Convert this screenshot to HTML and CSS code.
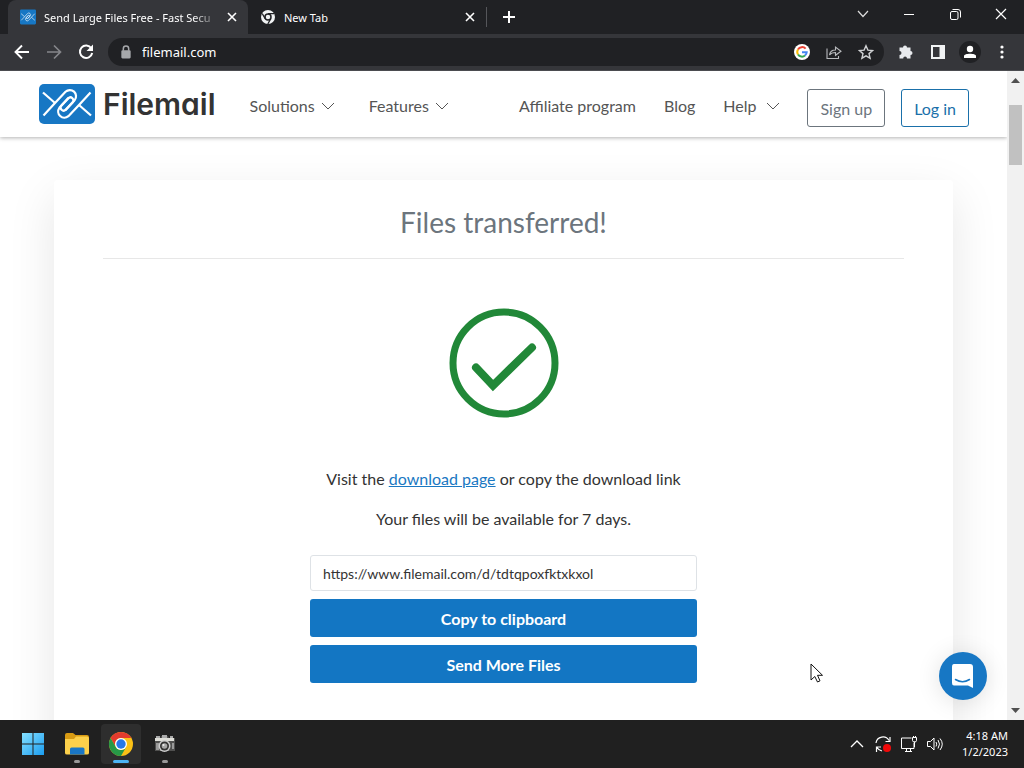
FILE: index.html
```html
<!DOCTYPE html>
<html lang="en">
<head>
<meta charset="utf-8">
<meta name="viewport" content="width=device-width, initial-scale=1">
<title>Send Large Files Free - Fast Secure File Transfer</title>
<link rel="stylesheet" href="styles.css">
</head>
<body>
<svg width="0" height="0" class="defs" aria-hidden="true">
  <symbol id="mark" viewBox="0 0 56 40">
    <rect width="56" height="40" rx="5" fill="#1777c4"/>
    <g fill="none" stroke="#fff" stroke-width="2.2" stroke-linejoin="round">
      <path d="M4 8.500 16 19"/>
      <path d="M4.500 31.500 16 19 26.500 7.800A6.200 6.200 0 0 1 35.600 16.200L26.800 25.600A3 3 0 0 1 22.400 21.500L29.500 13.800"/>
      <path d="M52 31.500 40 21"/>
      <path d="M51.500 8.500 40 21 29.400 32.200A6.200 6.200 0 0 1 20.400 23.800L29.200 14.400A3 3 0 0 1 33.600 18.500L26.500 26.200"/>
    </g>
  </symbol>
  <symbol id="chev" viewBox="0 0 14 8"><path d="M1 1 7 7 13 1" fill="none" stroke="currentColor"/></symbol>
  <symbol id="x" viewBox="0 0 10 10"><path d="M1 1 9 9M9 1 1 9" fill="none" stroke="currentColor" stroke-width="1.600"/></symbol>
</svg>

<div class="tabstrip">
  <div class="tab tab-active">
    <svg class="favicon" viewBox="0 0 56 52"><rect width="56" height="52" rx="4" fill="#1777c4"/><use href="#mark" y="6" width="56" height="40"/></svg>
    <span class="tab-title">Send Large Files Free - Fast Secu</span>
    <button class="tab-btn" aria-label="Close tab"><svg width="10" height="10"><use href="#x"/></svg></button>
  </div>
  <div class="tab tab-idle">
    <svg class="favicon" viewBox="0 0 16 16"><circle cx="8" cy="8" r="7" fill="#f1f3f4"/><circle cx="8" cy="8" r="3" fill="none" stroke="#202124" stroke-width="1.500"/><path d="M8 4.700H14M5.200 9.600 2.200 4.500M10.800 9.600 7.800 15" stroke="#202124" stroke-width="1.300"/></svg>
    <span class="tab-title">New Tab</span>
    <button class="tab-btn" aria-label="Close tab"><svg width="10" height="10"><use href="#x"/></svg></button>
  </div>
  <button class="tab-btn new-tab" aria-label="New tab"><svg width="12" height="12" viewBox="0 0 12 12"><path d="M6 0V12M0 6H12" stroke="#fff" stroke-width="2"/></svg></button>
  <div class="window-controls">
    <button aria-label="Search tabs"><svg width="12" height="8" viewBox="0 0 12 8"><path d="M1 1 6 6.500 11 1" fill="none" stroke="#ddd" stroke-width="1.200"/></svg></button>
    <button aria-label="Minimize"><svg width="10" height="10" viewBox="0 0 10 10"><path d="M0 5.500H10" stroke="#fff"/></svg></button>
    <button aria-label="Restore"><svg width="11" height="11" viewBox="0 0 11 11"><rect x=".5" y="2.500" width="7.500" height="8" rx="1.500" fill="none" stroke="#fff"/><path d="M2.500.5H8A2.500 2.500 0 0 1 10.500 3V8.500" fill="none" stroke="#fff"/></svg></button>
    <button aria-label="Close"><svg width="12" height="12" viewBox="0 0 12 12"><path d="M1 1 11 11M11 1 1 11" stroke="#fff" stroke-width="1.200"/></svg></button>
  </div>
</div>

<div class="toolbar">
  <button class="tool" aria-label="Back"><svg viewBox="0 0 16 16"><path d="M15 8H2M8 1.500 1.500 8 8 14.500" fill="none" stroke="#fff" stroke-width="1.900"/></svg></button>
  <button class="tool" aria-label="Forward"><svg viewBox="0 0 16 16"><path d="M1 8H14M8 1.500 14.500 8 8 14.500" fill="none" stroke="#85868a" stroke-width="1.700"/></svg></button>
  <button class="tool" aria-label="Reload"><svg viewBox="0 0 16 16"><path d="M13.300 4.300A6.200 6.200 0 1 0 14.200 9" fill="none" stroke="#fff" stroke-width="2"/><path d="M15 .5V7H8.500Z" fill="#fff"/></svg></button>
  <div class="omnibox">
    <svg class="lock" viewBox="0 0 10 12"><rect x="1" y="4.500" width="8" height="7" rx="1" fill="#a6a8ab"/><path d="M2.700 5V3.200a2.300 2.300 0 0 1 4.600 0V5" fill="none" stroke="#a6a8ab" stroke-width="1.300"/></svg>
    <input class="address" type="text" value="filemail.com" aria-label="Address">
    <svg class="ico" viewBox="0 0 16 16"><circle cx="8" cy="8" r="8" fill="#fff"/><g fill="none" stroke-width="2"><path d="M11.600 4.700A4.700 4.700 0 0 0 4 5.500" stroke="#ea4335"/><path d="M4 5.500a4.700 4.700 0 0 0 0 5" stroke="#fbbc05"/><path d="M4 10.500a4.700 4.700 0 0 0 7 1" stroke="#34a853"/><path d="M11 11.500A4.700 4.700 0 0 0 12.700 8.200H8" stroke="#4285f4"/></g></svg>
    <svg class="ico" viewBox="0 0 16 16"><path d="M1 4.500V14.500H12.500V12M3.500 11C4 7.500 6 6 9.500 6V3L15 7.200 9.500 11.300V8.500C7 8.500 5 9 3.500 11Z" fill="none" stroke="#b8babd" stroke-width="1.100"/></svg>
    <svg class="ico" viewBox="0 0 16 16"><path d="M8 1.800 9.900 6.100 14.600 6.500 11 9.600 12.100 14.200 8 11.800 3.900 14.200 5 9.600 1.400 6.500 6.100 6.100Z" fill="none" stroke="#d0d2d4" stroke-width="1.400"/></svg>
  </div>
  <div class="tools-right">
    <button class="tool" aria-label="Extensions"><svg viewBox="0 0 16 16"><path d="M5 3.500a2 2 0 0 1 4 0H12.500V7a2 2 0 0 1 0 4V14.500H9a1.900 1.900 0 0 0-3.800 0H1.500V11a2 2 0 0 0 0-4V3.500Z" fill="#e8eaed"/></svg></button>
    <button class="tool" aria-label="Side panel"><svg viewBox="0 0 16 16"><path d="M1 1H15V15H1ZM3 3V13H9.500V3Z" fill="#f1f3f4" fill-rule="evenodd"/></svg></button>
    <button class="tool avatar" aria-label="Profile"><svg viewBox="0 0 16 16"><circle cx="8" cy="5" r="3.200" fill="#fff"/><path d="M2 14V12C2 9 14 9 14 12V14Z" fill="#fff"/></svg></button>
    <button class="tool" aria-label="Menu"><svg viewBox="0 0 16 16"><g fill="#fff"><circle cx="8" cy="3" r="1.600"/><circle cx="8" cy="8" r="1.600"/><circle cx="8" cy="13" r="1.600"/></g></svg></button>
  </div>
</div>

<div class="viewport">
  <div class="page">
    <header class="site-header">
      <a class="brand" href="#"><svg class="brand-mark" aria-hidden="true"><use href="#mark"/></svg><span>Filemail</span></a>
      <nav class="nav-left">
        <a href="#">Solutions <svg class="chev"><use href="#chev"/></svg></a>
        <a href="#">Features <svg class="chev"><use href="#chev"/></svg></a>
      </nav>
      <nav class="nav-right">
        <a href="#">Affiliate program</a>
        <a href="#">Blog</a>
        <a class="help" href="#">Help <svg class="chev"><use href="#chev"/></svg></a>
      </nav>
      <div class="account">
        <button class="btn-outline">Sign up</button>
        <button class="btn-outline btn-login">Log in</button>
      </div>
    </header>
    <main class="stage">
      <section class="card">
        <h1>Files transferred!</h1>
        <svg class="tick" viewBox="0 0 110 110" aria-hidden="true"><circle cx="55" cy="55" r="51" fill="none" stroke="#218838" stroke-width="7"/><path d="M27 59.500 44 77.500 83 39.500" fill="none" stroke="#218838" stroke-width="8" stroke-linecap="round"/></svg>
        <p>Visit the <a href="#">download page</a> or copy the download link</p>
        <p>Your files will be available for 7 days.</p>
        <div class="actions">
          <input class="link-box" type="text" value="https://www.filemail.com/d/tdtqpoxfktxkxol" aria-label="Download link" readonly>
          <button class="btn">Copy to clipboard</button>
          <button class="btn">Send More Files</button>
        </div>
      </section>
    </main>
    <button class="chat" aria-label="Open chat"><svg width="24" height="26" viewBox="0 0 24 26"><path d="M3 1H19Q22 1 22 4V25L17 22.500H3Q1 22.500 1 20V4Q1 1 3 1Z" fill="#fff"/><path d="M4.500 16.500Q11.500 21 18.500 16.500" fill="none" stroke="#1777c4" stroke-width="1.500" stroke-linecap="round"/></svg></button>
    <svg class="pointer" viewBox="0 0 14 20" aria-hidden="true"><path d="M1 1V17L4.800 13.500 7.500 19 10 17.800 7.500 12.300H12.500Z" fill="#fff" stroke="#111"/></svg>
  </div>
  <div class="scrollbar">
    <svg viewBox="0 0 9 5"><path d="M4.500 0 9 5H0Z"/></svg>
    <div class="track"><div class="thumb"></div></div>
    <svg viewBox="0 0 9 5"><path d="M0 0H9L4.500 5Z"/></svg>
  </div>
</div>

<footer class="taskbar">
  <div class="apps">
    <button class="app" aria-label="Start"><svg viewBox="0 0 26 26"><defs><linearGradient id="win" x2="1" y2="1"><stop stop-color="#85e0ff"/><stop offset="1" stop-color="#1b9df0"/></linearGradient></defs><path d="M2 2H12.500V12.500H2ZM13.500 2H24V12.500H13.500ZM2 13.500H12.500V24H2ZM13.500 13.500H24V24H13.500Z" fill="url(#win)"/></svg></button>
    <button class="app app-open" aria-label="File Explorer"><svg viewBox="0 0 26 26"><path d="M1 4Q1 2 3 2H9L11.500 4H23Q25 4 25 6V12H1Z" fill="#d89b13"/><path d="M1 8H10L12 5.500H23Q25 5.500 25 7.500V22Q25 23.500 23 23.500H3Q1 23.500 1 22Z" fill="#fcd04b"/><path d="M6 23.500V18Q6 16.500 7.500 16.500H19Q20.500 16.500 20.500 18V23.500Z" fill="#1976c5"/></svg></button>
    <button class="app app-current" aria-label="Google Chrome"><svg viewBox="0 0 26 26"><circle cx="13" cy="13" r="12" fill="#fbc116"/><path d="M2.600 7A12 12 0 0 1 23.400 7H13A6 6 0 0 0 7.800 16Z" fill="#e33b2e"/><path d="M2.600 7A12 12 0 0 0 13 25L18.200 16A6 6 0 0 1 7.800 16Z" fill="#279847"/><circle cx="13" cy="13" r="6" fill="#fff"/><circle cx="13" cy="13" r="4.700" fill="#2878e8"/></svg></button>
    <button class="app app-open" aria-label="Camera"><svg viewBox="0 0 26 26"><path d="M3 8H8L9 5H16L17 7H23V20H3Z" fill="#50504f"/><path d="M3 7H22V10H3Z" fill="#deded8"/><path d="M4 5H8V7H4ZM10 4H15V7H10ZM18 5H21V7H18Z" fill="#aaa"/><path d="M4 12H7V19H4ZM20 12H22V18H20Z" fill="#999"/><circle cx="12.500" cy="15" r="6" fill="#ccc"/><circle cx="12.500" cy="15" r="4.500" fill="#333"/><circle cx="12.500" cy="15" r="2.800" fill="#a6a6a6"/><circle cx="11.500" cy="14" r="1" fill="#eee"/></svg></button>
  </div>
  <div class="tray">
    <svg viewBox="0 0 18 18"><path d="M3 12 9 6 15 12" fill="none" stroke="#fff" stroke-width="1.300"/></svg>
    <svg viewBox="0 0 18 18"><path d="M2 8A7 7 0 0 1 15 5.500M16 2V6.500H11.500M8 16A7 7 0 0 1 3 12.500M2.500 17V12H7" fill="none" stroke="#fff" stroke-width="1.200"/><circle cx="13" cy="13" r="4" fill="#f00a0a"/></svg>
    <svg viewBox="0 0 18 18"><path d="M11.500 3H1.500V13.500H14V8M5 16.500H12M6.500 13.500V16.500M10.500 13.500V16.500M14.500 6.500V12M12.500 2.500H16.500V5.500Q16.500 7 14.500 7 12.500 7 12.500 5.500ZM13.500 1V2.500M15.500 1V2.500" fill="none" stroke="#fff"/></svg>
    <svg viewBox="0 0 18 18"><path d="M1.500 6.500H4.500L8 3V15L4.500 11.500H1.500ZM10 7Q11.500 9 10 11.500M12 5Q15 9 12 13.500M14 3.500Q18.500 9 14 15" fill="none" stroke="#fff"/></svg>
    <div class="clock"><span>4:18 AM</span><span>1/2/2023</span></div>
  </div>
</footer>
</body>
</html>
```
FILE: styles.css
```css
* { box-sizing: border-box; }
body {
  margin: 0;
  height: 100vh;
  display: flex;
  flex-direction: column;
  overflow: hidden;
  background: #fff;
  font-family: "Lato", sans-serif;
  font-size: 16px;
  color: #333;
}
button { border: 0; padding: 0; background: none; font: inherit; color: inherit; }
svg { display: block; flex: none; }
.defs { position: absolute; }

/* Browser tabs */
.tabstrip {
  height: 34px;
  flex: none;
  display: flex;
  padding-left: 8px;
  background: #202124;
  color: #fff;
}
.tab { display: flex; align-items: center; padding: 0 11px 0 12px; gap: 8px; }
.tab-active { width: 240px; border-radius: 8px 8px 0 0; background: #35363a; }
.tab-idle { width: 239px; border-right: 1px solid #55565a; margin: 7px 0; }
.favicon { width: 16px; height: 16px; }
.tab-title {
  flex: 1;
  min-width: 0;
  white-space: nowrap;
  font-family: "Noto Sans", sans-serif;
  font-size: 11px;
}
.tab-active .tab-title { mask-image: linear-gradient(to right, #000 85%, transparent); }
.tab-btn { display: flex; align-items: center; }
.new-tab { margin-left: 16px; }
.window-controls { margin-left: auto; display: flex; }
.window-controls button { width: 46px; height: 28px; display: grid; place-items: center; }

/* Address bar */
.toolbar {
  height: 37px;
  flex: none;
  display: flex;
  align-items: center;
  gap: 16px;
  padding: 0 14px;
  background: #35363a;
  border-bottom: 1px solid #4b4c50;
}
.tool svg { width: 16px; height: 16px; }
.omnibox {
  flex: 1;
  height: 28px;
  min-width: 0;
  display: flex;
  align-items: center;
  gap: 16px;
  padding: 0 10px 0 12px;
  margin: 0 -2px;
  border-radius: 14px;
  background: #202124;
}
.lock { width: 12px; height: 14px; }
.address {
  flex: 1;
  min-width: 0;
  border: 0;
  padding: 0;
  margin-left: -6px;
  background: none;
  color: #fff;
  font-family: "Noto Sans", sans-serif;
  font-size: 13px;
}
.ico { width: 16px; height: 16px; }
.tools-right { display: flex; align-items: center; gap: 16px; }
.avatar { border-radius: 50%; background: #202124; box-shadow: 0 0 0 3px #202124; }

/* Page */
.viewport { flex: 1; min-height: 0; display: flex; }
.page { flex: 1; min-width: 0; position: relative; overflow: hidden; display: flex; flex-direction: column; }
.site-header {
  position: relative;
  z-index: 1;
  flex: none;
  display: flex;
  align-items: flex-start;
  padding: 13px 38px 10px 39px;
  background: #fff;
  box-shadow: 0 1px 4px rgba(0, 0, 0, .3);
  color: #555;
}
.site-header a { color: inherit; text-decoration: none; }
.brand { display: flex; align-items: center; gap: 8px; }
.brand-mark { width: 56px; height: 40px; }
.brand span {
  font: 600 30px/40px "Inter", sans-serif;
  font-feature-settings: "cv11";
  color: #333;
}
.nav-left, .nav-right { display: flex; padding-top: 10px; }
.nav-left a, .nav-right a { display: flex; align-items: center; gap: 6px; line-height: 24px; }
.nav-left { gap: 34px; margin-left: 34px; }
.nav-right { gap: 28px; margin-left: auto; }
.nav-right .help { gap: 10px; }
.chev { width: 14px; height: 8px; }
.account { display: flex; gap: 16px; margin-left: 27px; padding-top: 5px; }
.btn-outline {
  height: 38px;
  padding: 0 12px;
  border: 1px solid #6c757d;
  border-radius: 3px;
  color: #6c757d;
}
.btn-login { border-color: #1a70aa; color: #1a70aa; }
.stage { flex: 1; padding: 43px 54px 0; }
.card {
  min-height: 600px;
  padding: 24px 49px 0;
  border-radius: 4px;
  background: #fff;
  box-shadow: 0 16px 48px rgba(0, 0, 0, .1);
  display: flex;
  flex-direction: column;
  align-items: center;
}
.card h1 {
  align-self: stretch;
  margin: 0 0 49px;
  padding-bottom: 18px;
  border-bottom: 1px solid #e7e7e7;
  font-size: 28px;
  line-height: 36px;
  font-weight: 400;
  text-align: center;
  color: #6c757d;
}
.tick { width: 110px; height: 110px; margin-bottom: 49px; }
.card p { margin: 0 0 16px; line-height: 24px; }
.card p a { color: #1a78c2; }
.actions { width: 387px; max-width: 100%; margin-top: 8px; display: flex; flex-direction: column; gap: 8px; }
.link-box {
  width: 100%;
  height: 36px;
  padding: 0 12px;
  border: 1px solid #dee2e6;
  border-radius: 3px;
  font: 14px "Lato", sans-serif;
  color: #333;
}
.btn { height: 38px; border-radius: 3px; background: #1376c3; color: #fff; font-weight: 700; }
.chat {
  position: absolute;
  right: 20px;
  bottom: 20px;
  width: 48px;
  height: 48px;
  display: grid;
  place-items: center;
  border-radius: 50%;
  background: #1777c4;
  box-shadow: 0 2px 24px rgba(0, 0, 0, .12);
}
.pointer { position: absolute; left: 810px; top: 592px; width: 14px; height: 20px; }
.scrollbar {
  flex: none;
  width: 17px;
  display: flex;
  flex-direction: column;
  align-items: center;
  padding: 7px 0;
  background: #f1f1f1;
}
.scrollbar svg { width: 9px; height: 5px; fill: #505050; }
.track { flex: 1; align-self: stretch; padding: 22px 2px 0; }
.thumb { height: 60px; background: #c1c1c1; }

/* Taskbar */
.taskbar {
  height: 48px;
  flex: none;
  display: flex;
  justify-content: space-between;
  align-items: center;
  padding: 0 16px 0 13px;
  background: #202020;
  color: #fff;
}
.apps { display: flex; gap: 4px; }
.app {
  width: 40px;
  height: 40px;
  display: flex;
  flex-direction: column;
  align-items: center;
  gap: 3px;
  padding-top: 7px;
  border-radius: 4px;
}
.app svg { width: 26px; height: 26px; }
.app-open::after, .app-current::after { content: ""; width: 6px; height: 3px; border-radius: 2px; background: #999; }
.app-current { background: #2e2e2e; }
.app-current::after { width: 16px; background: #4cb5f5; }
.tray { display: flex; align-items: center; gap: 8px; }
.tray svg { width: 18px; height: 18px; }
.clock {
  display: flex;
  flex-direction: column;
  align-items: flex-end;
  margin-left: 10px;
  font: 11px/16px "Noto Sans", sans-serif;
}
```
